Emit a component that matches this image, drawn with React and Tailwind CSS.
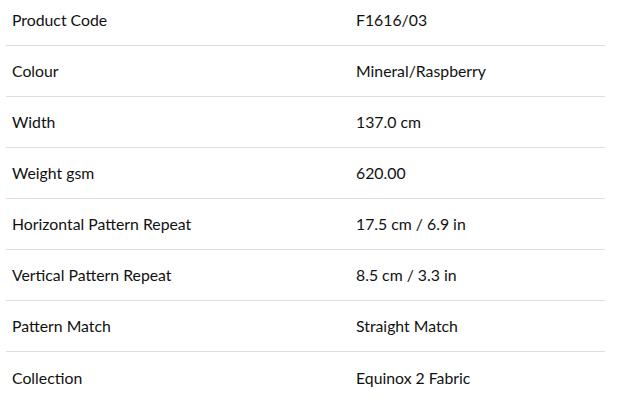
export default function App() {
  const rows = [
    ["Product Code", "F1616/03"],
    ["Colour", "Mineral/Raspberry"],
    ["Width", "137.0 cm"],
    ["Weight gsm", "620.00"],
    ["Horizontal Pattern Repeat", "17.5 cm / 6.9 in"],
    ["Vertical Pattern Repeat", "8.5 cm / 3.3 in"],
    ["Pattern Match", "Straight Match"],
    ["Collection", "Equinox 2 Fabric"],
  ];
  return (
    <div className="w-[618px] h-[408px] bg-white overflow-hidden" style={{ fontFamily: "Lato, 'Noto Sans', sans-serif" }}>
      <div className="ml-[6px] w-[599px] flex flex-col text-[15.8px] text-[#111]">
        {rows.map(([k, v], i) => (
          <div
            key={k}
            className={`flex items-center ${i === 0 ? "h-[46px] pb-[5px]" : "h-[51px]"} ${i < rows.length - 1 ? "border-b border-[#dedede]" : ""}`}
          >
            <div className="w-[344px] pl-[6px]">{k}</div>
            <div className="pl-[6px]">{v}</div>
          </div>
        ))}
      </div>
    </div>
  );
}
